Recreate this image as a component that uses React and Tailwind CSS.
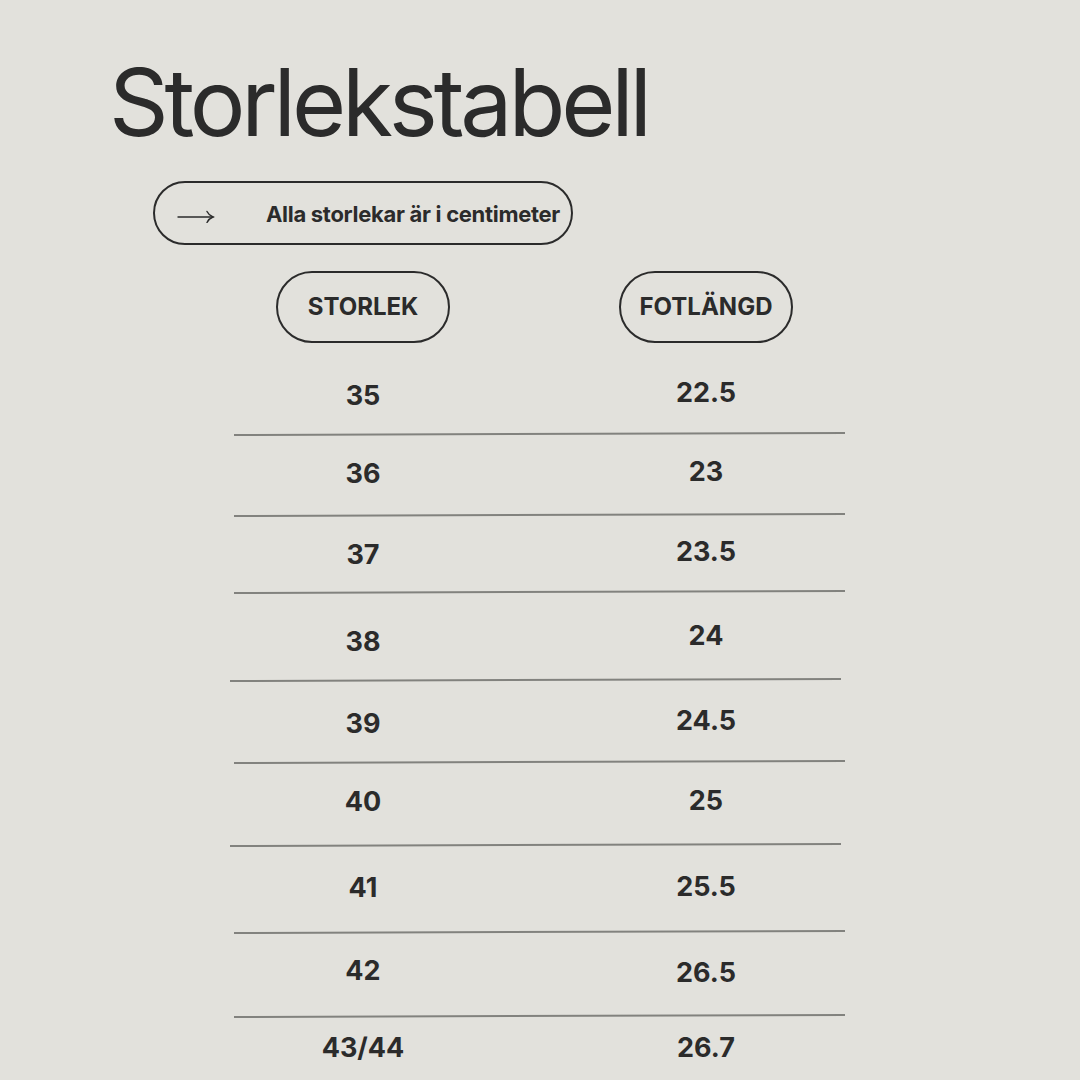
import React from 'react'

const rows = [
  { size: '35', foot: '22.5', h: 'h-[90px]', l: 'pt-[37px]', r: 'pt-[34px]', line: 'ml-[234px]' },
  { size: '36', foot: '23', h: 'h-[79px]', l: 'pt-[23px]', r: 'pt-[21px]', line: 'ml-[234px]' },
  { size: '37', foot: '23.5', h: 'h-[75px]', l: 'pt-[23px]', r: 'pt-[20px]', line: 'ml-[234px]' },
  { size: '38', foot: '24', h: 'h-[86px]', l: 'pt-[33px]', r: 'pt-[27px]', line: 'ml-[230px]' },
  { size: '39', foot: '24.5', h: 'h-[80px]', l: 'pt-[27px]', r: 'pt-[24px]', line: 'ml-[234px]' },
  { size: '40', foot: '25', h: 'h-[81px]', l: 'pt-[23px]', r: 'pt-[22px]', line: 'ml-[230px]' },
  { size: '41', foot: '25.5', h: 'h-[85px]', l: 'pt-[26px]', r: 'pt-[25px]', line: 'ml-[234px]' },
  { size: '42', foot: '26.5', h: 'h-[82px]', l: 'pt-[22px]', r: 'pt-[24px]', line: 'ml-[234px]' },
  { size: '43/44', foot: '26.7', h: 'h-[63px]', l: 'pt-[15px]', r: 'pt-[15px]', line: null },
]

function Arrow() {
  return (
    <svg width="38" height="14" viewBox="0 0 38 14" fill="none" stroke="#2b2b2b" strokeWidth="1.4" strokeLinecap="round">
      <path d="M1 8 H36" />
      <path d="M30 2.5 Q32 6.5 36 8 Q32 9.5 30 13.5" />
    </svg>
  )
}

export default function App() {
  return (
    <div className="w-[1080px] h-[1080px] overflow-hidden bg-[#e2e1dc] text-[#2b2b2b] font-['Inter',sans-serif]">
      {/* title */}
      <h1 className="pt-[56px] pl-[109px] text-[93px] leading-none tracking-[-4.2px] font-normal">
        Storlekstabell
      </h1>

      <div className="mt-[32px] ml-[153px] w-[420px] h-[64px] rounded-full border-2 border-[#2b2b2b] flex items-center pl-[22px]">
        <div className="pt-[6px]"><Arrow /></div>
        <span className="ml-[51px] pt-[3px] text-[22px] font-bold tracking-[-0.3px]">
          Alla storlekar är i centimeter
        </span>
      </div>

      {/* header */}
      <div className="mt-[26px] ml-[234px] flex">
        <div className="w-[258px] flex justify-center">
          <div className="w-[174px] h-[72px] rounded-full border-2 border-[#2b2b2b] flex items-center justify-center text-[24px] font-bold">
            STORLEK
          </div>
        </div>
        <div className="w-[172px] ml-[128px] flex justify-center">
          <div className="w-[174px] shrink-0 h-[72px] rounded-full border-2 border-[#2b2b2b] flex items-center justify-center text-[24px] font-bold">
            FOTLÄNGD
          </div>
        </div>
      </div>

      {/* rows */}
      <div>
        {rows.map((row) => (
          <div key={row.size}>
            <div className={`${row.h} ml-[234px] flex text-[27px] leading-[32px] font-bold`}>
              <div className={`w-[258px] text-center ${row.l}`}>{row.size}</div>
              <div className={`w-[172px] ml-[128px] text-center ${row.r}`}>{row.foot}</div>
            </div>
            {row.line && (
              <div className={`${row.line} w-[611px] h-[2px] bg-[#82827e] -rotate-[0.19deg]`} />
            )}
          </div>
        ))}
      </div>
    </div>
  )
}
